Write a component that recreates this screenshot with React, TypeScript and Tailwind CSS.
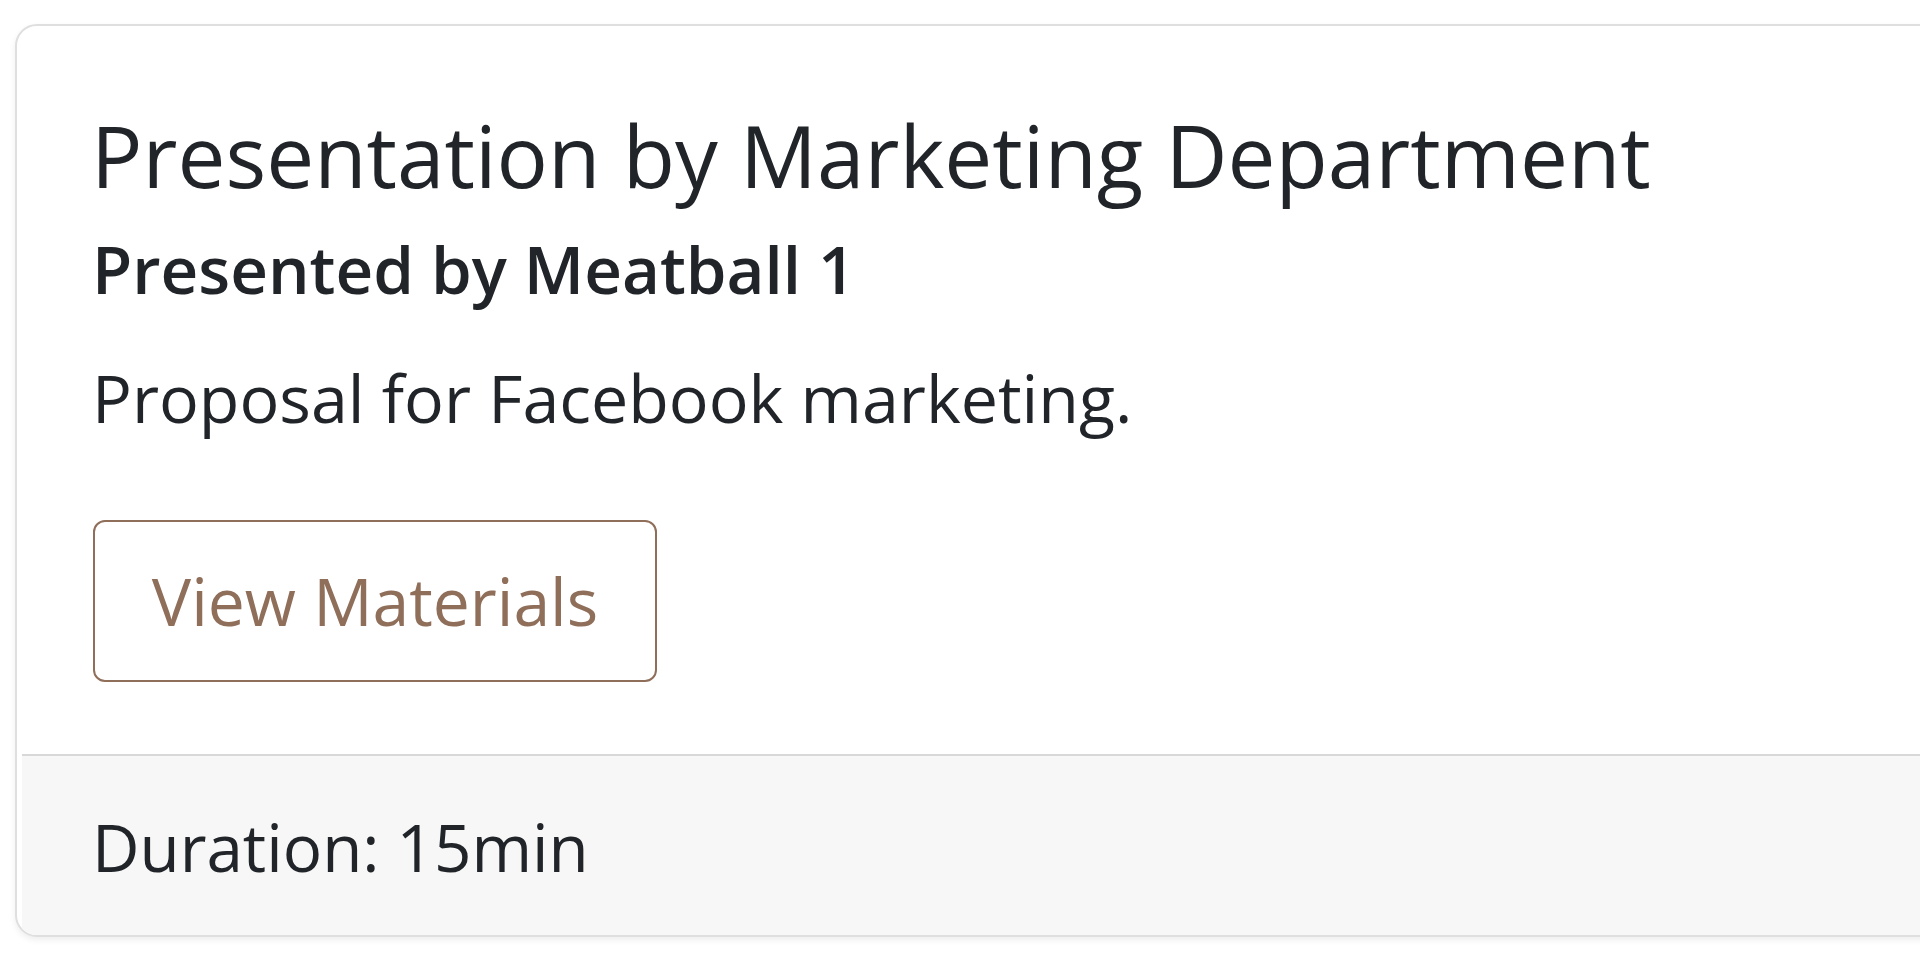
import React from "react";

export default function App() {
  return (
    <div className="min-h-screen w-full overflow-hidden bg-white pt-[24px] font-['Open_Sans',sans-serif] text-[#212529]">
      <div className="ml-[15px] w-[1960px] overflow-hidden rounded-[22px] border-2 border-[#dfdfdf] bg-white shadow-[0_3px_6px_rgba(0,0,0,0.07)]">
        <div className="pl-[76px] pr-[76px] pt-[78px] pb-[72px]">
          <h5 className="-ml-[2px] text-[85.5px] font-normal leading-[1.2]">
            Presentation by Marketing Department
          </h5>
          <h6 className="-ml-[1px] mt-[23px] text-[65.5px] font-semibold leading-[1.2]">
            Presented by Meatball 1
          </h6>
          <p className="-ml-[1px] mt-[40px] text-[66.3px] font-normal leading-[1.5]">
            Proposal for Facebook marketing.
          </p>
          <button className="mt-[72px] block h-[162px] w-[564px] rounded-[12px] border-2 border-[#8f6e5a] bg-white text-center text-[66px] leading-[1.5] text-[#8f6e5a]">
            View Materials
          </button>
        </div>
        <div className="ml-[5px] border-t-2 border-[#d8d8d8] bg-[#f7f7f7] pl-[71px] pt-[42px] pb-[39px]">
          <div className="-ml-[1px] text-[65.5px] leading-[1.5]">Duration: 15min</div>
        </div>
      </div>
    </div>
  );
}
